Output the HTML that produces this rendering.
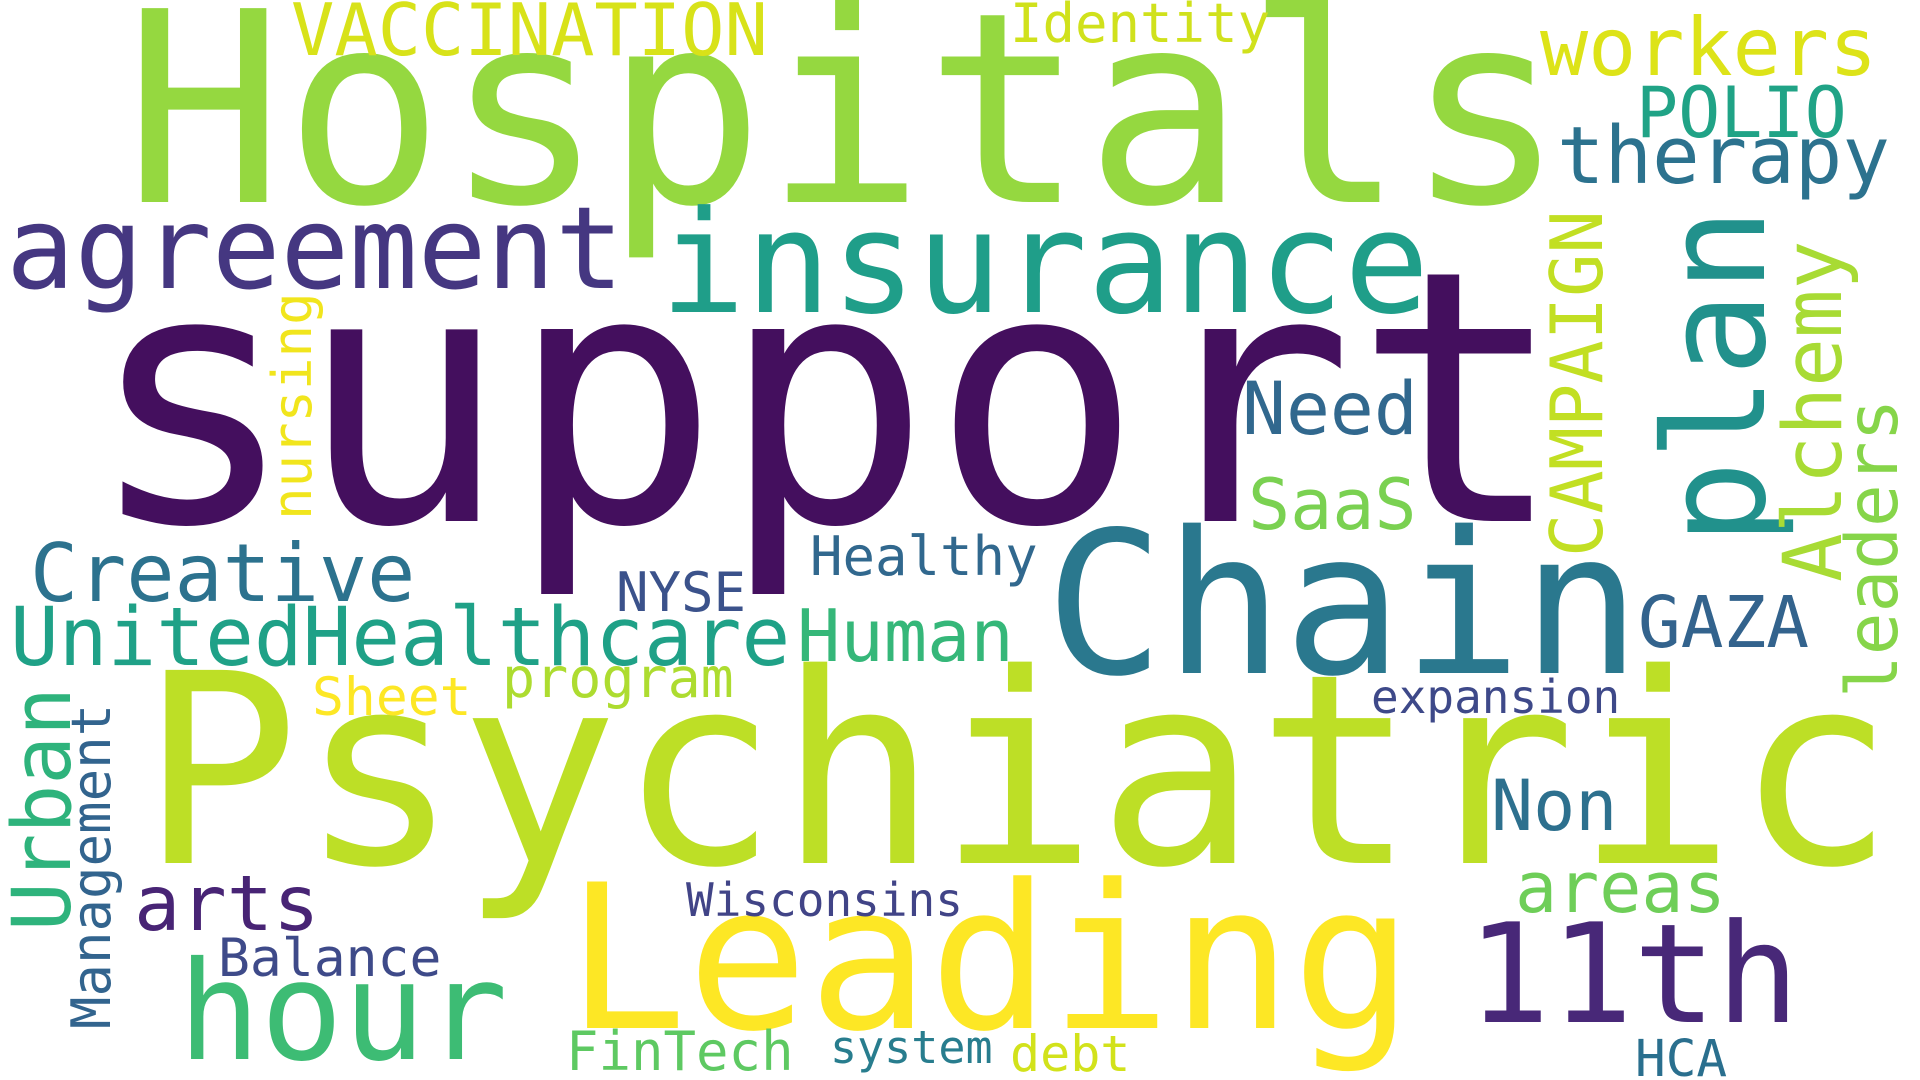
<!DOCTYPE html>
<html><head><meta charset="utf-8"><style>
html,body{margin:0;padding:0;background:#fff;width:1920px;height:1080px;overflow:hidden}
body{position:relative;font-family:"DejaVu Sans Mono","Liberation Mono",monospace}
.w{position:absolute;line-height:1;white-space:nowrap}
.v{position:absolute;line-height:1;white-space:nowrap;transform:rotate(-90deg);transform-origin:0 0}
</style></head><body>
<div class="w" style="left:124px;top:-23px;font-size:266px;color:#95d840">Hospitals</div>
<div class="w" style="left:86px;top:224px;font-size:351px;color:#440f5e">support</div>
<div class="w" style="left:140px;top:640px;font-size:265px;color:#bddf26">Psychiatric</div>
<div class="w" style="left:1045px;top:506px;font-size:198px;color:#2a788e">Chain</div>
<div class="w" style="left:566px;top:859px;font-size:201px;color:#fde725">Leading</div>
<div class="w" style="left:660px;top:193px;font-size:142px;color:#1f9e89">insurance</div>
<div class="w" style="left:6px;top:192px;font-size:114px;color:#453781">agreement</div>
<div class="w" style="left:1467px;top:906px;font-size:138px;color:#482878">11th</div>
<div class="w" style="left:178px;top:944px;font-size:137px;color:#3dbc74">hour</div>
<div class="w" style="left:10px;top:598px;font-size:81px;color:#1fa187">UnitedHealthcare</div>
<div class="w" style="left:30px;top:534px;font-size:80px;color:#2c728e">Creative</div>
<div class="w" style="left:797px;top:600px;font-size:72px;color:#35b779">Human</div>
<div class="w" style="left:1242px;top:373px;font-size:73px;color:#31688e">Need</div>
<div class="w" style="left:1248px;top:470px;font-size:70px;color:#7ad151">SaaS</div>
<div class="w" style="left:1638px;top:587px;font-size:71px;color:#33638d">GAZA</div>
<div class="w" style="left:1491px;top:771px;font-size:70px;color:#2d708e">Non</div>
<div class="w" style="left:1515px;top:853px;font-size:70px;color:#6ece58">areas</div>
<div class="w" style="left:134px;top:866px;font-size:77px;color:#482475">arts</div>
<div class="w" style="left:1557px;top:117px;font-size:79px;color:#2c728e">therapy</div>
<div class="w" style="left:1636px;top:78px;font-size:70px;color:#20a386">POLIO</div>
<div class="w" style="left:1540px;top:8px;font-size:80px;color:#dde318">workers</div>
<div class="w" style="left:291px;top:-6px;font-size:72px;color:#d8e219">VACCINATION</div>
<div class="w" style="left:1010px;top:-3px;font-size:54px;color:#d0e11c">Identity</div>
<div class="w" style="left:810px;top:530px;font-size:54px;color:#31688e">Healthy</div>
<div class="w" style="left:616px;top:566px;font-size:54px;color:#3b528b">NYSE</div>
<div class="w" style="left:312px;top:671px;font-size:53px;color:#fde725">Sheet</div>
<div class="w" style="left:502px;top:651px;font-size:55px;color:#addc30">program</div>
<div class="w" style="left:1371px;top:674px;font-size:46px;color:#3e4989">expansion</div>
<div class="w" style="left:686px;top:877px;font-size:46px;color:#414487">Wisconsins</div>
<div class="w" style="left:218px;top:932px;font-size:53px;color:#3e4a89">Balance</div>
<div class="w" style="left:566px;top:1025px;font-size:54px;color:#5ec962">FinTech</div>
<div class="w" style="left:830px;top:1025px;font-size:45px;color:#287d8e">system</div>
<div class="w" style="left:1010px;top:1029px;font-size:50px;color:#d2e21b">debt</div>
<div class="w" style="left:1635px;top:1034px;font-size:51px;color:#2a6f8e">HCA</div>

<div class="v" style="left:1647px;top:545px;font-size:140px;color:#21918c">plan</div>
<div class="v" style="left:1541px;top:557px;font-size:72px;color:#c2df23">CAMPAIGN</div>
<div class="v" style="left:1774px;top:582px;font-size:81px;color:#a8db34">Alchemy</div>
<div class="v" style="left:1837px;top:698px;font-size:71px;color:#86d549">leaders</div>
<div class="v" style="left:266px;top:520px;font-size:54px;color:#f1e51d">nursing</div>
<div class="v" style="left:3px;top:931px;font-size:81px;color:#2eb37c">Urban</div>
<div class="v" style="left:65px;top:1029px;font-size:54px;color:#32648e">Management</div>
</body></html>
